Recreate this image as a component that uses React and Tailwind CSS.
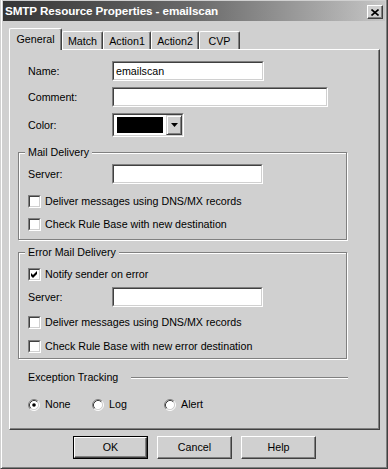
import React from "react";

const Sunken = ({ className = "", innerClass = "", children }) => (
  <div className={`border border-t-[#808080] border-l-[#808080] border-r-white border-b-white ${className}`}>
    <div className={`w-full h-full border border-t-[#404040] border-l-[#404040] border-r-[#d0d0d0] border-b-[#d0d0d0] bg-white ${innerClass}`}>
      {children}
    </div>
  </div>
);

const Checkbox = ({ checked }) => (
  <Sunken className="w-[13px] h-[13px] shrink-0">
    {checked && (
      <svg width="9" height="9" viewBox="0 0 9 9" className="block">
        <path d="M1 3 L3 5 L7 1 L7 4 L3 8 L1 6 Z" fill="#000" />
      </svg>
    )}
  </Sunken>
);

const CheckRow = ({ checked, label, className = "" }) => (
  <div className={`flex items-center gap-[4px] h-[13px] ${className}`}>
    <Checkbox checked={checked} />
    <span>{label}</span>
  </div>
);

const Radio = ({ checked }) => (
  <svg width="12" height="12" viewBox="0 0 12 12" className="block shrink-0">
    <circle cx="6" cy="6" r="4.5" fill="#fff" />
    <path d="M2.11 9.89 A5.5 5.5 0 0 1 9.89 2.11" fill="none" stroke="#808080" strokeWidth="1" />
    <path d="M9.89 2.11 A5.5 5.5 0 0 1 2.11 9.89" fill="none" stroke="#fff" strokeWidth="1" />
    <path d="M2.82 9.18 A4.5 4.5 0 0 1 9.18 2.82" fill="none" stroke="#404040" strokeWidth="1" />
    <path d="M9.18 2.82 A4.5 4.5 0 0 1 2.82 9.18" fill="none" stroke="#d0d0d0" strokeWidth="1" />
    {checked && <circle cx="6" cy="6" r="1.8" fill="#000" />}
  </svg>
);

const RadioItem = ({ checked, label, className = "" }) => (
  <div className={`flex items-center gap-[5px] h-[13px] ${className}`}>
    <Radio checked={checked} />
    <span>{label}</span>
  </div>
);

const Group = ({ title, className = "", children }) => (
  <div className={`relative ml-[8px] w-[329px] border border-[#808080] shadow-[inset_1px_1px_0_#fff,1px_1px_0_#fff] pl-[9px] ${className}`}>
    <span className="absolute left-[6px] top-[-7px] px-[3px] bg-[#d0d0d0] leading-[13px]">{title}</span>
    {children}
  </div>
);

const Tab = ({ label, width, selected }) =>
  selected ? (
    <div
      className={`relative z-10 ${width} h-[22px] -mb-[1px] bg-[#d0d0d0] border-t border-l border-r border-t-white border-l-white border-r-[#404040] shadow-[inset_-1px_0_0_#808080] rounded-tl-[2px] rounded-tr-[2px] pt-[4px] text-center leading-[13px]`}
    >
      {label}
    </div>
  ) : (
    <div
      className={`${width} h-[18px] bg-[#d0d0d0] border-t border-l border-r border-t-white border-l-white border-r-[#404040] shadow-[inset_-1px_0_0_#808080] rounded-tl-[2px] rounded-tr-[2px] pt-[3px] text-center leading-[13px]`}
    >
      {label}
    </div>
  );

const Button = ({ label, isDefault }) => (
  <div className={`w-[75px] h-[23px] ${isDefault ? "border border-black" : ""}`}>
    <div className="w-full h-full border border-t-white border-l-white border-r-[#404040] border-b-[#404040] shadow-[inset_-1px_-1px_0_#808080] flex items-center justify-center">
      <span className="leading-[13px]">{label}</span>
    </div>
  </div>
);

export default function App() {
  return (
    <div className="w-[388px] h-[469px] bg-[#d0d0d0] font-[family-name:'Liberation_Sans',Arial,sans-serif] text-black text-[10.7px] leading-[13px] overflow-hidden">
      <div className="w-full h-full border-l border-r border-b border-l-[#d0d0d0] border-r-[#404040] border-b-[#404040]">
        <div className="w-full h-full flex flex-col shadow-[inset_1px_0_0_#fff,inset_-1px_-1px_0_#808080] px-[2px] pt-[1px]">
          {/* Title bar */}
          <div className="h-[20px] bg-gradient-to-r from-[#363636] via-[#6a6a6a] to-[#c6c6c6] flex items-center justify-between pl-[2px] pr-[2px]">
            <span className="text-white font-bold text-[11.7px] leading-[14px] tracking-[-0.1px]">
              SMTP Resource Properties - emailscan
            </span>
            <div className="w-[16px] h-[14px] mt-[2px] border border-t-white border-l-white border-r-[#404040] border-b-[#404040] shadow-[inset_-1px_-1px_0_#808080] bg-[#d0d0d0] flex items-center justify-center">
              <svg width="8" height="7" viewBox="0 0 8 7" className="block">
                <path d="M0.5 0.5 L7.5 6.5 M7.5 0.5 L0.5 6.5" stroke="#000" strokeWidth="1.6" />
              </svg>
            </div>
          </div>

          {/* Tabs */}
          <div className="mt-[7px] ml-[6px] h-[21px] flex items-end">
            <Tab label="General" width="w-[53px]" selected />
            <Tab label="Match" width="w-[41px]" />
            <Tab label="Action1" width="w-[48px]" />
            <Tab label="Action2" width="w-[48px]" />
            <Tab label="CVP" width="w-[41px]" />
          </div>

          {/* Panel */}
          <div className="ml-[6px] w-[371px] h-[381px] border border-t-white border-l-white border-r-[#404040] border-b-[#404040] shadow-[inset_-1px_-1px_0_#808080] flex flex-col">
            <div className="mt-[11px] pl-[18px] flex items-center h-[20px]">
              <span className="w-[84px]">Name:</span>
              <Sunken className="w-[152px] h-[20px]" innerClass="flex items-center pl-[2px]">
                <span>emailscan</span>
              </Sunken>
            </div>
            <div className="mt-[6px] pl-[18px] flex items-center h-[20px]">
              <span className="w-[84px]">Comment:</span>
              <Sunken className="w-[216px] h-[20px]" />
            </div>
            <div className="mt-[6px] pl-[18px] flex items-center h-[24px]">
              <span className="w-[84px]">Color:</span>
              <Sunken className="w-[72px] h-[24px]" innerClass="flex items-stretch">
                <div className="flex-1 py-[2px] pl-[3px] pr-[3px]">
                  <div className="w-full h-full bg-black" />
                </div>
                <div className="w-[16px] border border-t-[#d0d0d0] border-l-[#d0d0d0] border-r-[#404040] border-b-[#404040] shadow-[inset_1px_1px_0_#fff,inset_-1px_-1px_0_#808080] bg-[#d0d0d0] flex items-center justify-center">
                  <svg width="7" height="4" viewBox="0 0 7 4" className="block">
                    <path d="M0 0 H7 L3.5 4 Z" fill="#000" />
                  </svg>
                </div>
              </Sunken>
            </div>

            <Group title="Mail Delivery" className="mt-[15px] pt-[11px] pb-[8px]">
              <div className="flex items-center h-[20px]">
                <span className="w-[84px]">Server:</span>
                <Sunken className="w-[151px] h-[20px]" />
              </div>
              <CheckRow className="mt-[11px]" label="Deliver messages using DNS/MX records" />
              <CheckRow className="mt-[10px]" label="Check Rule Base with new destination" />
            </Group>

            <Group title="Error Mail Delivery" className="mt-[12px] pt-[15px] pb-[5px]">
              <CheckRow checked label="Notify sender on error" />
              <div className="mt-[6px] flex items-center h-[20px]">
                <span className="w-[84px]">Server:</span>
                <Sunken className="w-[151px] h-[20px]" />
              </div>
              <CheckRow className="mt-[9px]" label="Deliver messages using DNS/MX records" />
              <CheckRow className="mt-[11px]" label="Check Rule Base with new error destination" />
            </Group>

            <div className="mt-[12px] ml-[8px] w-[330px] pl-[10px] flex items-center h-[13px]">
              <span>Exception Tracking</span>
              <div className="flex-1 ml-[13px] h-[2px] border-t border-b border-t-[#808080] border-b-white" />
            </div>

            <div className="mt-[14px] ml-[8px] pl-[10px] flex items-center h-[13px]">
              <RadioItem checked label="None" className="w-[64px]" />
              <RadioItem label="Log" className="w-[72px]" />
              <RadioItem label="Alert" />
            </div>
          </div>

          {/* Buttons */}
          <div className="mt-[6px] pl-[1px] flex justify-center gap-[9px]">
            <Button label="OK" isDefault />
            <Button label="Cancel" />
            <Button label="Help" />
          </div>
        </div>
      </div>
    </div>
  );
}
